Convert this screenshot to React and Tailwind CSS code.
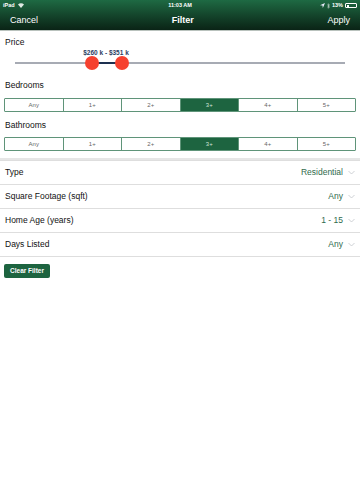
import React from 'react';

const Chevron = () => (
  <svg width="7" height="5" viewBox="0 0 7 5" className="ml-[5px]">
    <path d="M0.5 1 L3.5 4 L6.5 1" fill="none" stroke="#c2c5ca" strokeWidth="0.8" />
  </svg>
);

const Segmented = ({ options, selected }) => (
  <div className="mx-[4px] flex h-[14px] border border-[#5f9479] rounded-[1px]">
    {options.map((o, i) => (
      <div
        key={o}
        className={`flex-1 flex items-center justify-center text-[6px] ${
          i > 0 ? 'border-l border-[#5f9479]' : ''
        } ${o === selected ? 'bg-[#1d6440] text-[#cfe3d8]' : 'bg-white text-[#666]'}`}
      >
        {o}
      </div>
    ))}
  </div>
);

const Row = ({ label, value }) => (
  <div className="h-[24px] flex items-center justify-between px-[5px] border-b border-[#dedede]">
    <span className="text-[8.5px] text-[#111]">{label}</span>
    <span className="flex items-center text-[8.5px] text-[#2f6b4d]">
      {value}
      <Chevron />
    </span>
  </div>
);

export default function App() {
  const opts = ['Any', '1+', '2+', '3+', '4+', '5+'];
  return (
    <div className="w-[360px] h-[480px] bg-white overflow-hidden" style={{ fontFamily: '"Liberation Sans", Arial, sans-serif' }}>
      {/* header */}
      <div className="h-[30px] bg-gradient-to-b from-[#1e6a43] to-[#0a2416] text-white">
        <div className="h-[11px] relative flex items-center justify-between px-[3px] text-[5.5px] font-bold">
          <span className="flex items-center gap-[3px]">
            iPad
            <svg width="6" height="5" viewBox="0 0 6 5">
              <path d="M0 1.6 A4.2 4.2 0 0 1 6 1.6 L3 5 Z" fill="#dfe9e3" />
            </svg>
          </span>
          <span className="absolute left-1/2 -translate-x-1/2">11:03 AM</span>
          <span className="flex items-center gap-[2px]">
            <svg width="5" height="5" viewBox="0 0 5 5">
              <path d="M5 0 L0 2.2 L2.5 2.5 L2.8 5 Z" fill="#eef" />
            </svg>
            <svg width="3" height="6" viewBox="0 0 3 6">
              <path d="M0.3 1.5 L2.5 4 L1.4 5.3 V0.7 L2.5 2 L0.3 4.5" fill="none" stroke="#dfe9e3" strokeWidth="0.5" />
            </svg>
            <span>13%</span>
            <span className="w-[12px] h-[5px] border border-white rounded-[1px] flex p-[0.5px]">
              <span className="w-[2px] bg-white" />
            </span>
          </span>
        </div>
        <div className="h-[19px] flex items-center justify-between px-[10px] text-[9px]">
          <span>Cancel</span>
          <span className="font-bold">Filter</span>
          <span>Apply</span>
        </div>
      </div>
      <div className="h-[1px] bg-[#b9c2bd]" />

      {/* price */}
      <div className="h-[12px] mt-[5px] px-[5px] flex items-center text-[8.5px] text-[#111]">Price</div>
      <div className="relative h-[26px] mx-[15px]">
        <div className="absolute left-0 right-0 top-[14px] h-[2px] bg-[#a7abb4]" />
        <div className="absolute left-[77px] w-[30px] top-[14px] h-[2px] bg-[#1d3050]" />
        <div className="absolute left-[70px] top-[8px] w-[14px] h-[14px] rounded-full bg-[#f6412f]" />
        <div className="absolute left-[100px] top-[8px] w-[14px] h-[14px] rounded-full bg-[#f6412f]" />
        <div className="absolute left-[91px] -translate-x-1/2 top-[0px] text-[6.5px] font-bold text-[#2b3d62] whitespace-nowrap">
          $260 k - $351 k
        </div>
      </div>

      <div className="h-[12px] mt-[5px] px-[5px] flex items-center text-[8.5px] text-[#111]">Bedrooms</div>
      <div className="mt-[7px]">
        <Segmented options={opts} selected="3+" />
      </div>
      <div className="h-[12px] mt-[7px] px-[5px] flex items-center text-[8.5px] text-[#111]">Bathrooms</div>
      <div className="mt-[6px]">
        <Segmented options={opts} selected="3+" />
      </div>

      <div className="mt-[7px] h-[2px] bg-[#e6e6e6]" />
      <div className="border-t border-[#dedede]" />
      <Row label="Type" value="Residential" />
      <Row label="Square Footage (sqft)" value="Any" />
      <Row label="Home Age (years)" value="1 - 15" />
      <Row label="Days Listed" value="Any" />

      <div className="flex px-[4px] pt-[7px]">
        <button className="h-[14px] w-[46px] bg-[#1d6440] text-white text-[6.5px] font-bold rounded-[2px]">
          Clear Filter
        </button>
      </div>
    </div>
  );
}
